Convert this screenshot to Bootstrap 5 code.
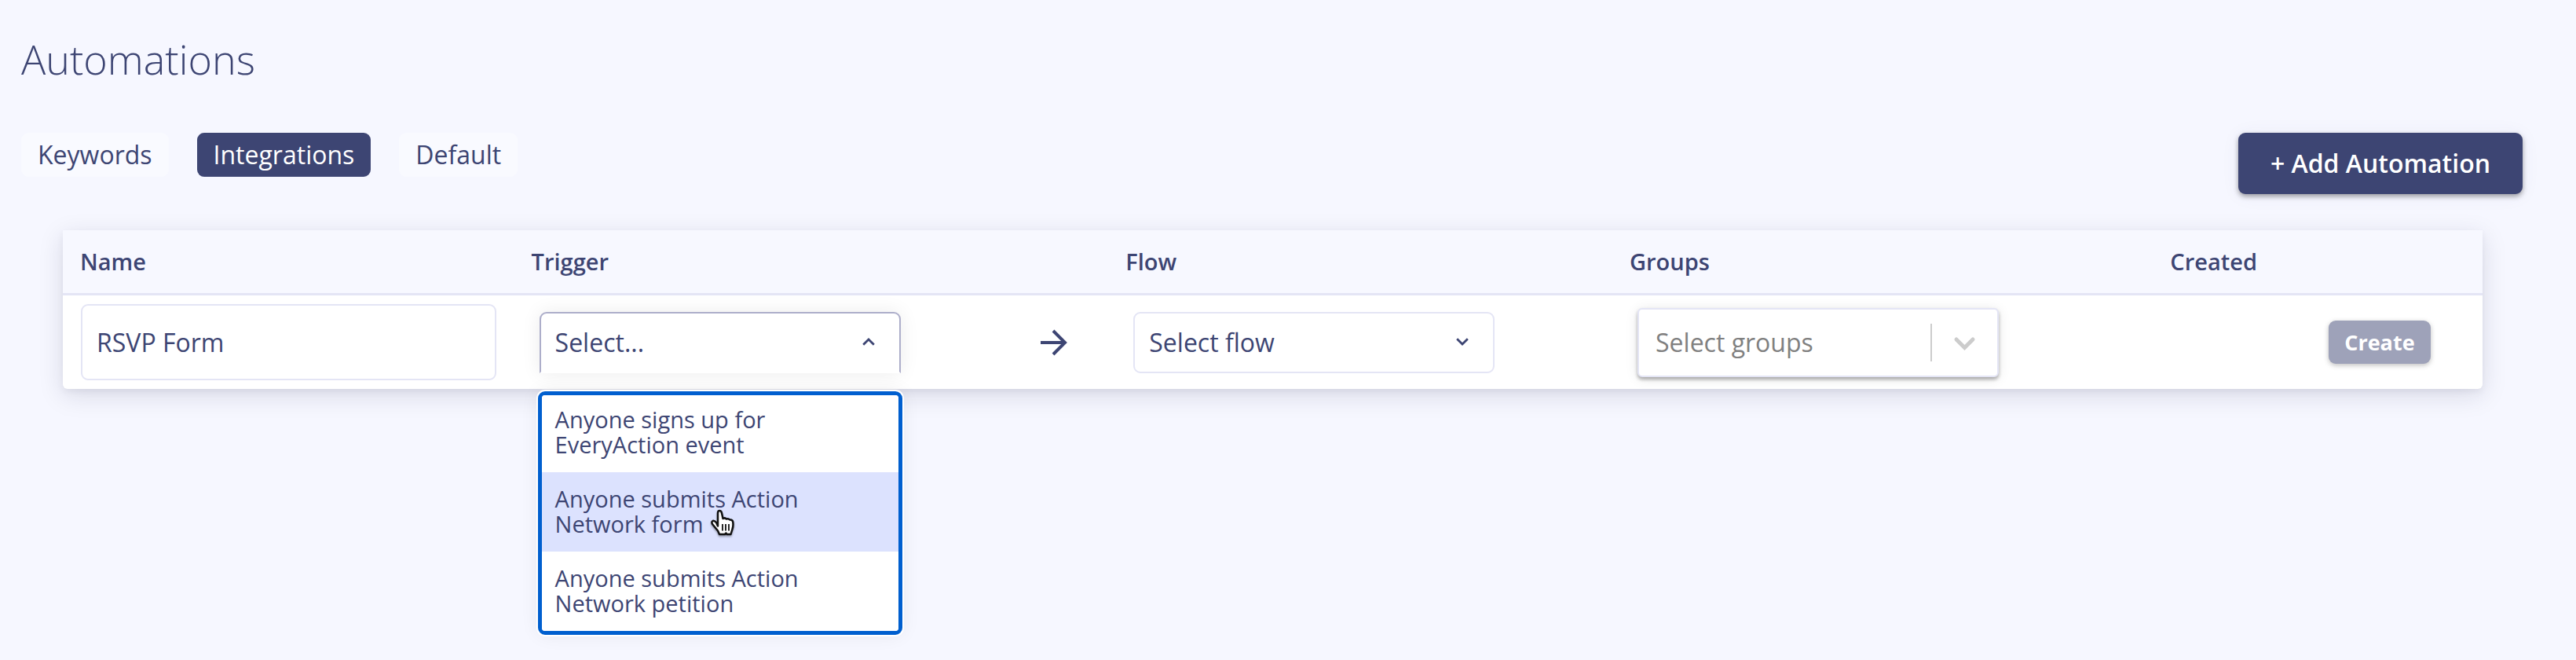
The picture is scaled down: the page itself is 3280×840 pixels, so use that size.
<!DOCTYPE html>
<html lang="en">
<head>
<meta charset="utf-8">
<meta name="viewport" content="width=device-width, initial-scale=1">
<title>Automations</title>
<link rel="stylesheet" href="https://cdn.jsdelivr.net/npm/bootstrap@5.3.0/dist/css/bootstrap.min.css">
<style>
  :root { --ink: #3d4573; --line: #e4e5f5; --page: #f6f7ff; }
  body { font-family: "Open Sans", "Noto Sans", sans-serif; background: var(--page); color: var(--ink); }
  .page { padding: 45px 68px 40px 27px; }
  .page-title { font-size: 52px; line-height: 60px; font-weight: 300; margin-bottom: 64px; }

  .tabs { gap: 36px; }
  .tab { padding: 0 21px; border-radius: 9px; background: #f9faff; color: var(--ink); font-size: 32px; line-height: 56px; text-decoration: none; }
  .tab.active { background: var(--ink); color: #fff; }

  .action { border: 0; border-radius: 9px; background: var(--ink); color: #fff; font-weight: 600; box-shadow: 0 3px 6px rgba(0,0,0,.36), 0 2px 24px rgba(61,69,115,.06); }
  .action-lg { font-size: 32px; line-height: 78px; padding: 0 41px; }
  .action-sm { font-size: 27px; line-height: 55px; padding: 0 20px; font-weight: 700; }
  .action:disabled { background: #9ea2b9; color: #fff; opacity: 1; box-shadow: 0 2px 6px rgba(0,0,0,.25); }

  .panel { margin: 46px 51px 0 53px; background: #fff; border-radius: 0 0 6px 6px; box-shadow: 0 8px 32px rgba(20,20,60,.13), 0 4px 8px rgba(20,20,60,.05); }
  .grid-table { width: 100%; table-layout: fixed; }
  .grid-table th { background: #f7f8ff; border-bottom: 3px solid var(--line); padding: 0 22px; font-size: 29px; line-height: 80px; font-weight: 600; }
  .grid-table td { padding: 11px 23px; vertical-align: middle; }
  .grid-table td.pick { padding-left: 32px; padding-right: 52px; }

  .field { font-size: 32px; line-height: 40px; color: var(--ink); background-color: #fff; border: 2px solid var(--line); border-radius: 9px; box-shadow: none; }
  .field:focus { color: var(--ink); border-color: var(--line); box-shadow: none; }
  .field-text { height: 97px; padding: 0 18px; }
  .field-pick { width: 460px; max-width: 100%; height: 78px; padding: 0 80px 0 18px; background-repeat: no-repeat; background-size: 16px 10px; background-position: right 31px top 31px;
    background-image: url("data:image/svg+xml,%3Csvg xmlns='http://www.w3.org/2000/svg' viewBox='0 0 16 10'%3E%3Cpath d='M1.2 1.2 8 8l6.800-6.800' fill='none' stroke='%233d4573' stroke-width='2.800'/%3E%3C/svg%3E"); }
  .field-pick.is-open { border-color: #adaeca; border-bottom-color: transparent; border-radius: 9px 9px 0 0; box-shadow: 0 0 24px rgba(0,0,0,.08);
    background-image: url("data:image/svg+xml,%3Csvg xmlns='http://www.w3.org/2000/svg' viewBox='0 0 16 10'%3E%3Cpath d='M1.2 8.800 8 2l6.800 6.800' fill='none' stroke='%233d4573' stroke-width='2.800'/%3E%3C/svg%3E"); }
  .field-groups { height: 88px; padding: 0 100px 0 21px; color: #808080; border-radius: 6px; box-shadow: 0 3px 4px rgba(0,0,0,.3), 0 2px 16px rgba(0,0,0,.1);
    background-size: 60px 48px; background-position: right 26px center;
    background-image: url("data:image/svg+xml,%3Csvg xmlns='http://www.w3.org/2000/svg' viewBox='0 0 60 48'%3E%3Cpath d='M2 0v48' stroke='%23ccc' stroke-width='2'/%3E%3Cpath d='M34 20l10.500 10.500L55 20' fill='none' stroke='%23ccc' stroke-width='5' stroke-linecap='round'/%3E%3C/svg%3E"); }
  .field-groups:focus { color: #808080; }

  .choices { position: absolute; z-index: 5; top: 100%; left: -2px; right: -2px; margin-top: 23px; border: 5px solid #005fcf; border-radius: 9px; background: #fff; overflow: hidden; box-shadow: 0 0 0 2px #fff, 0 0 24px rgba(0,0,0,.07); }
  .choice { display: block; width: 100%; border: 0; background: #fff; color: var(--ink); text-align: left; font-size: 29px; line-height: 32px; padding: 18px 60px 19px 17px; }
  .choice:first-child { padding-top: 15px; }
  .choice.hovered { background: #dce2fe; }
  .pointer { position: absolute; z-index: 6; left: 217px; top: 251px; width: 34px; height: 36px; filter: drop-shadow(0 2px 1px rgba(0,0,0,.3)); }
</style>
</head>
<body>
<main class="page min-vh-100">
  <h1 class="page-title">Automations</h1>

  <div class="d-flex justify-content-between align-items-start">
    <nav class="tabs d-flex" aria-label="Automation types">
      <a class="tab" href="#keywords">Keywords</a>
      <a class="tab active" href="#integrations" aria-current="page">Integrations</a>
      <a class="tab" href="#default">Default</a>
    </nav>
    <button type="button" class="action action-lg">+ Add Automation</button>
  </div>

  <div class="panel">
    <table class="grid-table">
      <colgroup>
        <col style="width:18.65%"><col style="width:24.56%"><col style="width:20.83%"><col style="width:22.34%"><col style="width:6.52%"><col style="width:7.1%">
      </colgroup>
      <thead>
        <tr>
          <th scope="col">Name</th>
          <th scope="col">Trigger</th>
          <th scope="col">Flow</th>
          <th scope="col">Groups</th>
          <th scope="col">Created</th>
          <th aria-label="Actions"></th>
        </tr>
      </thead>
      <tbody>
        <tr>
          <td><input class="form-control field field-text" type="text" value="RSVP Form" aria-label="Name"></td>
          <td class="pick">
            <div class="d-flex justify-content-between align-items-center">
              <div class="position-relative">
                <select class="form-select field field-pick is-open" aria-label="Trigger"><option>Select...</option></select>
                <div class="choices" role="listbox" aria-label="Trigger choices">
                  <button type="button" class="choice" role="option">Anyone signs up for EveryAction event</button>
                  <button type="button" class="choice hovered" role="option">Anyone submits Action Network form</button>
                  <button type="button" class="choice" role="option">Anyone submits Action Network petition</button>
                </div>
                <svg class="pointer" viewBox="0 0 34 36" aria-hidden="true">
                  <path d="M11 21.500V5q0-3 2.200-3t2.800 3l1.500 7q2-1.500 4.500.5 2.500-1 4.200 1 3.300-.5 4 2.500.8 5-.7 9.500L27.500 32h-5l-1-1.500L20 32h-7l-2-4.500-7-8.500q-1.500-3 .5-4 2-.8 4.500 2z" transform="translate(-1 0)" fill="#fff" stroke="#111" stroke-width="2.500" stroke-linejoin="round"/>
                  <path d="M16 19v8.500M20 19v8.500M24 19v8.500" stroke="#111" stroke-width="1.800"/>
                </svg>
              </div>
              <svg width="34" height="34" viewBox="0 0 34 34" fill="none" stroke="#3d4573" stroke-width="4" aria-hidden="true"><path d="M0 17h31M16 2l15 15-15 15"/></svg>
            </div>
          </td>
          <td class="pick"><select class="form-select field field-pick" aria-label="Flow"><option>Select flow</option></select></td>
          <td class="pick"><select class="form-select field field-pick field-groups" aria-label="Groups"><option>Select groups</option></select></td>
          <td></td>
          <td><button type="button" class="action action-sm" disabled>Create</button></td>
        </tr>
      </tbody>
    </table>
  </div>
</main>
<script src="https://cdn.jsdelivr.net/npm/bootstrap@5.3.0/dist/js/bootstrap.bundle.min.js"></script>
</body>
</html>
